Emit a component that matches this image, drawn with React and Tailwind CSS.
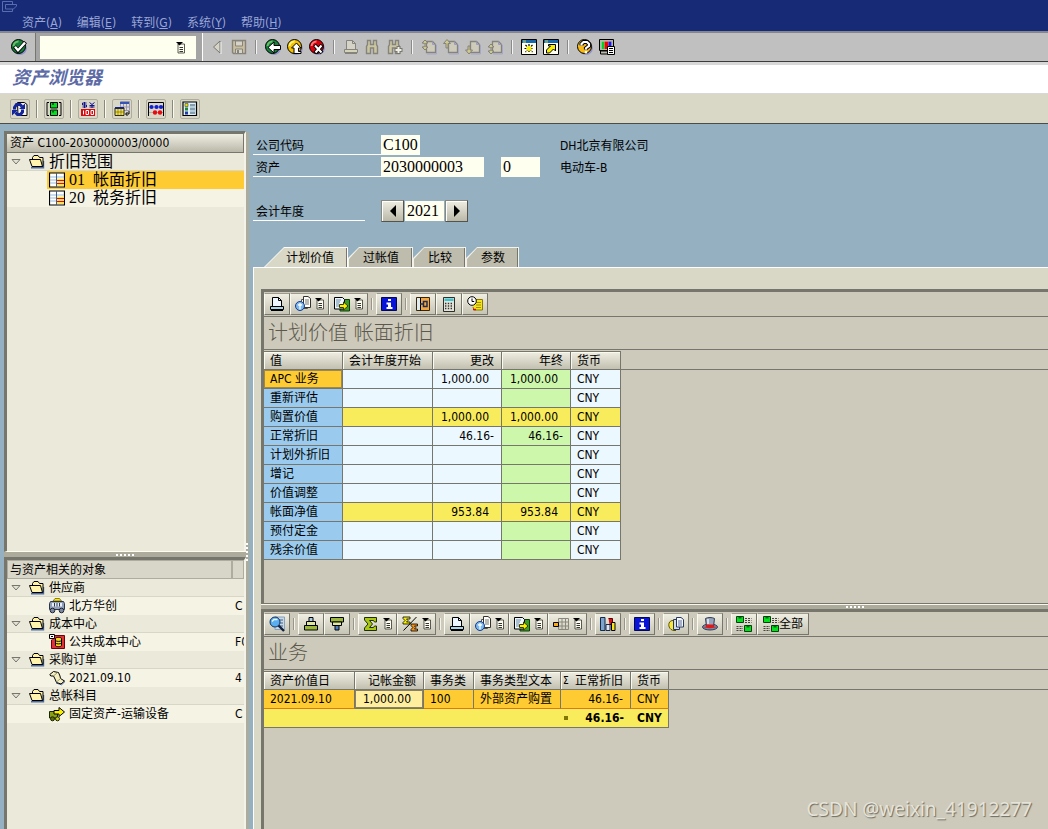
import clsx from 'clsx';

/* ---------- icons ---------- */

function Icon({ children, className = 'w-4 h-4', box = '0 0 16 16' }) {
  return (
    <svg className={clsx('shrink-0', className)} viewBox={box} fill="none" aria-hidden="true">
      {children}
    </svg>
  );
}

function Ball({ color, light, children }) {
  return (
    <Icon>
      <circle cx="9" cy="9.2" r="6.8" fill="#8f90c8" />
      <circle cx="7.5" cy="7.5" r="7" fill={color} stroke="#000" />
      <path d="M2.5 7a5 5 0 015-4.5" stroke={light} strokeWidth="2" />
      {children}
    </Icon>
  );
}

const CheckIcon = () => (
  <Ball color="#16803a" light="#6cc06a">
    <path d="M3.5 7.5l3.5 4L14.5 3" stroke="#000" strokeWidth="4" />
    <path d="M4 7.8l3 3.4L14 3.6" stroke="#fff" strokeWidth="2.4" />
  </Ball>
);

const BackIcon = () => (
  <Ball color="#16803a" light="#6cc06a">
    <path d="M3 8.5L9 3v3.5h6.500v4H9V14z" fill="#fff" stroke="#000" />
  </Ball>
);

const ExitIcon = () => (
  <Ball color="#f5c000" light="#fff27a">
    <path d="M9.500 4L14 9h-2.500v3.500H14v2H7V9H4.500z" fill="#fff" stroke="#000" />
  </Ball>
);

const CancelIcon = () => (
  <Ball color="#d8000c" light="#ff7a7a">
    <path d="M5.500 6l7.500 8M13 6l-7 8" stroke="#000" strokeWidth="4" />
    <path d="M6 6.500l6.500 7M12.500 6.500l-6 7" stroke="#fff" strokeWidth="2" />
  </Ball>
);

const HelpIcon = () => (
  <Ball color="#f8b818" light="#fff27a">
    <path d="M4.500 6.500V5l2-2h3.500l2 2v2l-3 2.200v1.300" stroke="#000" strokeWidth="4.200" />
    <path d="M4.500 6.500V5l2-2h3.500l2 2v2l-3 2.200v1.300M9 12v2.500" stroke="#fff" strokeWidth="2.200" />
  </Ball>
);

const PrevIcon = () => (
  <Icon>
    <path d="M11 2v12L4.500 8z" fill="#d6d4c6" stroke="#77766f" />
    <path d="M12 3v12" stroke="#f4f4f4" />
  </Icon>
);

const SaveIcon = () => (
  <Icon>
    <path d="M1.500 1.500h13v13h-12l-1-1z" fill="#c8bfa0" stroke="#85837b" strokeWidth="1.400" />
    <path d="M4.500 2h7v5h-7zM4.500 10h7v4.500h-7z" fill="#d6d4c8" stroke="#85837b" />
    <path d="M6 11h2v3H6z" fill="#85837b" />
  </Icon>
);

function PrintIcon({ off }) {
  const line = off ? '#85837b' : '#000';
  return (
    <Icon>
      <path d="M3.500 10V1.500h6l3 3V10" fill={off ? '#d5d3c8' : '#eef7ff'} stroke={line} />
      <path d="M9.500 1.500v3h3" stroke={line} />
      <path d="M1.500 10.500h13v3h-13z" fill={off ? '#d5d3b8' : '#a8d4ea'} stroke={line} />
      <path d="M2 14.500h12" stroke={line} />
    </Icon>
  );
}

function FindIcon({ next }) {
  return (
    <Icon>
      <path
        d="M1.500 14.500v-7l1-2v-4h3v4h3v-4h3v4l1 2v7h-4V9h-3v5.500z"
        fill="#c9c6a0"
        stroke="#85837b"
        strokeWidth="1.400"
      />
      {next && <path d="M11.500 7v8M7.500 11h8" stroke="#77766f" strokeWidth="4" />}
      {next && <path d="M11.500 8v6M8.500 11h6" stroke="#efeee6" strokeWidth="2" />}
    </Icon>
  );
}

const pageArrows = {
  first: 'M1 4l3-3 3 3H5v1H3V4zM1 8l3 3 3-3H5V7H3v1z',
  prev: 'M0.500 4.500l3.500-4 3.500 4H5V9H3V4.500z',
  next: 'M0.500 11l3.500 4 3.500-4H5V7H3v4z',
  last: 'M1 8l3-3 3 3H5v1H3V8zM1 12l3 3 3-3H5v-1H3v1z',
};

function PageIcon({ kind }) {
  return (
    <Icon>
      <path d="M5.500 13.500v-11h6l3 3v8z" fill="#cecbbb" stroke="#85837b" strokeWidth="1.300" />
      <path d="M11.500 2.500v3h3" stroke="#9a9ac4" />
      <path d="M6 15h9.500V6" stroke="#a5a6cc" />
      <path d={pageArrows[kind]} fill="#cfc98a" stroke="#85837b" />
    </Icon>
  );
}

function SessionIcon({ shortcut }) {
  return (
    <Icon>
      <path d="M.5.500h15v15H.5z" fill="#fffef0" stroke="#000" />
      <path d="M1 1h14v3H1z" fill="#1668ac" />
      <path d="M2 1h3v3H2z" fill="#f8f45c" opacity=".4" />
      {shortcut ? (
        <path d="M3.500 14v-3l4-4H5.500V5.500h7v6.500l-2-2L6.500 14z" fill="#f8f000" stroke="#000" />
      ) : (
        <g>
          <path d="M8 5v9M3.500 9.500h9M4.500 6l7 7M11.500 6l-7 7" stroke="#000" strokeWidth="1.200" strokeDasharray="2 1" />
          <circle cx="8" cy="9.500" r="2.500" fill="#f8f000" />
        </g>
      )}
    </Icon>
  );
}

const MonitorIcon = () => (
  <Icon>
    <path d="M.5.500h14v11H.5zM1.500 12h9v3h-9z" fill="#b9b7ac" stroke="#000" />
    <path d="M2.500 2.500h10v7.500h-10z" fill="#fff" />
    <path d="M2.500 2.500h3v7.500h-3z" fill="#00d028" />
    <path d="M5.500 2.500h4v7.500h-4z" fill="#f00000" />
    <path d="M9.500 2.500h3v7.500h-3z" fill="#1818e0" />
    <path d="M8.500 7.500h7v8h-7z" fill="#fff" stroke="#000" />
    <path d="M10 9.500h4M10 11.500h4M10 13.500h4" stroke="#000" />
  </Icon>
);

const RefreshIcon = () => (
  <Icon>
    <path d="M5.500 1.500h7l2.500 2v11H6z" fill="#f4f4f0" stroke="#000" />
    <path d="M2.500 8.500V6.500l2-3h3.500l2 2M10.500 8.500v2.500l-2 2.500H5.500L3.500 11.500" stroke="#14249a" strokeWidth="3" />
    <path d="M13 2.500v5.500H7zM0 14.500V9h6z" fill="#14249a" />
  </Icon>
);

const SwitchIcon = () => (
  <Icon>
    <path d="M3 1.500H1v13h2M13 1.500h2v13h-2" stroke="#000" />
    <path d="M4.500 1.500h7v5.500h-7zM4.500 9h7v5.500h-7z" fill="#00e01c" stroke="#000" />
    <path d="M6 2h2v2H6zM6 9.500h2v2H6z" fill="#0a6a14" />
  </Icon>
);

const CurrencyIcon = () => (
  <Icon>
    <path d="M1 8h14v7H1z" fill="#d80a10" />
    <path d="M6.500 2h-4v2h4v2h-4M4.500 1v6M9.500 1.500l2.500 2 2.500-2M12 3.500V7M9.500 4.500h5M9.500 6h5" stroke="#14148c" />
    <path d="M3.500 9.500v4M6 9.500h2.500v4H6zM11 9.500h2.500v4H11z" stroke="#fff" />
  </Icon>
);

const TableMoveIcon = () => (
  <Icon>
    <path d="M6.500.500h9v9h-9z" fill="#e0ddcc" stroke="#9896b4" />
    <path d="M6 1h9v2H6z" fill="#3454b8" />
    <path d="M9.500 3v6M12.500 3v6M7 6h8" stroke="#9896b4" />
    <path d="M1 7h9v7.500H1z" fill="#f7e23c" stroke="#000" strokeWidth=".8" />
    <path d="M1 6h9v2H1z" fill="#14248c" />
    <path d="M4 8v6M7 8v6M1 11h9" stroke="#5a5a30" strokeWidth=".6" />
    <path d="M15 10v3h-3M13.500 11l-2 2 2 2" stroke="#000" />
  </Icon>
);

const AbacusIcon = () => (
  <Icon>
    <path d="M.5 15V1.500h15V15" stroke="#000" />
    <path d="M1 6h14M1 11.500h14" stroke="#a9a79a" strokeWidth=".8" />
    <g fill="#1020d8">
      <circle cx="3.500" cy="6" r="2.100" />
      <circle cx="8.500" cy="6" r="2.100" />
      <circle cx="13" cy="6" r="2.100" />
    </g>
    <circle cx="7" cy="11.500" r="2.200" fill="#e80a10" />
    <circle cx="12" cy="11.500" r="2.200" fill="#e80a10" />
  </Icon>
);

const LegendIcon = () => (
  <Icon>
    <path d="M1 1h13.500v13.500H1z" fill="#dff0fb" stroke="#000" strokeWidth="1.200" />
    <path d="M3 2.500h3v3H3z" fill="#e8dc00" stroke="#44433c" strokeWidth=".6" />
    <path d="M3 6.500h3v3H3z" fill="#1c8a2c" />
    <path d="M3 10.500h3v3H3z" fill="#2038b0" />
    <path d="M8 4h5M8 8h5M8 12h5" stroke="#2c4a5c" />
    <path d="M8 6h5M8 10h5" stroke="#8aa8b8" />
  </Icon>
);

const FolderIcon = () => (
  <Icon>
    <path d="M2 13.800h12.500V7" stroke="#4a6da8" strokeWidth="1.400" />
    <path d="M3.500 6V3.500l1.500-2h4l1.500 2h3.500v9H12" fill="#fff2a4" stroke="#000" />
    <path d="M.5 5.500h11l2 7H3z" fill="#fff3ae" stroke="#000" />
  </Icon>
);

const AreaIcon = () => (
  <Icon>
    <path d="M.5 1h15v14H.5z" fill="#fff" stroke="#000" strokeWidth="1.200" />
    <path d="M1 5h6.500M1 8h6.500M1 11h6.500M8 5h7" stroke="#94b8e0" />
    <path d="M8 6.500h7v7.500H8z" fill="#ffe060" />
    <path d="M8 8.500h7M8 11.500h7" stroke="#e01010" />
    <path d="M7.500 1v14" stroke="#3c5c8c" />
  </Icon>
);

const VendorIcon = () => (
  <Icon>
    <path d="M4 3l2-2.500h4.500L12.500 3z" fill="#ffe800" stroke="#5a5000" strokeWidth=".7" />
    <path d="M1.500 3.500h13l1 2v6h-15v-6z" fill="#8fa0b8" stroke="#2c3448" />
    <path d="M3 5h10v3.500H3z" fill="#e8eef8" />
    <path d="M5.500 5v3.500M8 5v3.500M10.500 5v3.500" stroke="#2c3448" />
    <circle cx="3.500" cy="12.500" r="2.300" fill="#7c88a0" stroke="#1c2434" />
    <circle cx="12.500" cy="12.500" r="2.300" fill="#7c88a0" stroke="#1c2434" />
  </Icon>
);

const CostCenterIcon = () => (
  <Icon>
    <path d="M3 1.500h12.500v13H2.500V6" fill="#e03038" stroke="#700008" />
    <path d="M.5.500h5v4h-5z" fill="#fff" stroke="#000" />
    <path d="M2 2.500h2" stroke="#000" />
    <path d="M6.500 4.500c0-1.500 6-1.500 6 0v7c0 1.500-6 1.500-6 0z" fill="#f8d820" stroke="#000" />
    <path d="M6.500 6.500c1 1.200 5 1.200 6 0M6.500 9c1 1.200 5 1.200 6 0" stroke="#000" />
  </Icon>
);

const OrderIcon = () => (
  <Icon>
    <path d="M7 13l5.500 1.800L16 11.500" stroke="#4a6da8" />
    <path d="M.8 4.500L4.500 1.500l5 1L11 6l.5 2.500 4 2.500-3.500 3-4.500-1.500L6 9 4.500 6H1.800z" fill="#f4eec0" stroke="#000" />
    <path d="M4.500 6L8.500 2.500M11.500 8.500L7.500 12" stroke="#8a8458" strokeWidth=".8" />
  </Icon>
);

const AccountIcon = () => (
  <Icon>
    <path d="M.5 5.500h8V12H.5z" fill="#8aa014" stroke="#1c2400" />
    <path d="M5 4.500h5V1.500l5.500 4.500L10 10.500V8H5z" fill="#f8f000" stroke="#000" />
    <circle cx="3.500" cy="12.800" r="2" fill="#5c7010" stroke="#1c2400" />
    <circle cx="8.500" cy="12.800" r="2" fill="#c8d010" stroke="#1c2400" />
  </Icon>
);

const ListIcon = () => (
  <Icon className="w-2.5 h-3" box="0 0 10 12">
    <path d="M2 2h6.500v9H2z" fill="#fffef0" stroke="#33322c" strokeWidth=".8" />
    <path d="M3.500 5.500H7M3.500 7.500H7M3.500 9.500H7" stroke="#000" strokeWidth=".8" />
    <path d="M0 0h7L3.500 3.500z" fill="#000" />
  </Icon>
);

const PreviewIcon = () => (
  <Icon>
    <path d="M6.500 3.500v9h6v-9z" fill="#fff" stroke="#55544c" />
    <path d="M8.500.500h4.500l2.500 2v9h-7z" fill="#fff" stroke="#33322c" />
    <path d="M10 4h4M10 6h4M10 8h4" stroke="#77766c" />
    <circle cx="5" cy="10" r="4.500" fill="#7ab8f0" stroke="#183a8c" />
    <path d="M5 7v6.500M3 8.500c1 1 3 1 4 0" stroke="#fff" strokeWidth="1.300" />
  </Icon>
);

const ExportIcon = () => (
  <Icon>
    <path d="M10 3.500h5.500v11.500H6V13" fill="#3a9c28" stroke="#123c0c" />
    <path d="M.5 1.500h8l2 2v9.500H.5z" fill="#eef7ff" stroke="#000" />
    <path d="M2 4h5M2 6h4M2 8h3M2 10h3" stroke="#6688a0" />
    <path d="M5.500 8.500h4v-2.500L14 10l-4.500 4v-2.500h-4z" fill="#f8f000" stroke="#3a3a00" />
  </Icon>
);

const InfoIcon = () => (
  <Icon>
    <path d="M.5 1.500h15v13H.5z" fill="#0814d8" stroke="#04084c" />
    <path d="M7 3h3v2H7zM5.500 6.500H10V11h1.500v2h-6v-2H7V8.500H5.500z" fill="#fff" />
  </Icon>
);

const AreaSwitchIcon = () => (
  <Icon>
    <path d="M1.500 1.500h13v13h-13z" fill="#f4a83c" stroke="#3c2400" />
    <path d="M2 2h3.500v12H2z" fill="#dcecf6" />
    <path d="M5.500 2v12.500" stroke="#000" />
    <path d="M5 8h4M8.500 8V5.500H12v5H8.500z" stroke="#1c2c5c" strokeWidth="1.500" />
  </Icon>
);

const CalcIcon = () => (
  <Icon>
    <path d="M2.500 1.500h11v14h-11z" fill="#e4e3da" stroke="#000" strokeWidth=".8" />
    <path d="M3.500 2.500h9v2.500h-9z" fill="#38c4d0" />
    <path d="M4 7.500h8M4 10h8M4 12.500h8" stroke="#33322c" strokeWidth="1.300" strokeDasharray="1.400 1.400" />
  </Icon>
);

const ClockIcon = () => (
  <Icon>
    <path d="M8 3.500h7.500v10.500H7l-1-3" fill="#f4e418" stroke="#8a7a00" />
    <path d="M9 6.500h5M9 9h5M9 11.500h5" stroke="#a08c00" />
    <circle cx="5" cy="5" r="4.300" fill="#fff" stroke="#000" />
    <path d="M5 2.500V5.500h2.200" stroke="#000" />
    <path d="M6 13.500h3" stroke="#d80a10" strokeWidth="1.500" />
  </Icon>
);

const DetailIcon = () => (
  <Icon>
    <path d="M6 1h9.500v12.500H6z" fill="#c6d8ea" stroke="#8aa0b8" />
    <path d="M11 4h3M11 7h3M11 10h3" stroke="#446080" />
    <circle cx="6" cy="6" r="5" fill="#58aef0" stroke="#14305c" />
    <path d="M3 5.500l2-2h3.500" stroke="#e8f6ff" strokeWidth="1.300" />
    <path d="M9.500 9.500l5.500 5.500" stroke="#14203c" strokeWidth="2.400" />
  </Icon>
);

const SortUpIcon = () => (
  <Icon>
    <path d="M6 1.500h4V6H6z" fill="#a9cce4" stroke="#000" />
    <path d="M3.500 5.500h9v4h-9z" fill="#dfe89c" stroke="#000" />
    <path d="M1.500 9.500h13v4.500h-13z" fill="#9cb83c" stroke="#000" />
  </Icon>
);

const SortDownIcon = () => (
  <Icon>
    <path d="M1.500 1.500h13V6h-13z" fill="#9cb83c" stroke="#000" />
    <path d="M3.500 6h9v3.500h-9z" fill="#dfe89c" stroke="#000" />
    <path d="M6 9.500h4V14H6z" fill="#4c7cc4" stroke="#000" />
  </Icon>
);

const SumIcon = () => (
  <Icon>
    <path d="M1.500 1.500h12V6h-2l-1-1.500H6.500l3 3.500-3 3.500h4l1-1.500h2v4.500h-12V12L5 8 1.500 4z" fill="#a8c814" stroke="#202c00" />
  </Icon>
);

const SubtotalIcon = () => (
  <Icon>
    <path d="M1 1h7v2H4.500l1.500 1.500L4.500 6H8v2H1V6.500l2-2-2-2z" fill="#f8f000" stroke="#000" strokeWidth=".8" />
    <path d="M9 8h6.500v2h-3l1.300 1.500-1.300 1.500h3V15H9v-1.500l1.800-2L9 9.500z" fill="#f49018" stroke="#000" strokeWidth=".8" />
    <path d="M14.500 1L1.500 14.500" stroke="#000" />
  </Icon>
);

const LayoutIcon = () => (
  <Icon>
    <path d="M5.500 2.500h10v11h-10zM5.500 6h10M5.500 10h10M9 2.500v11M12.500 2.500v11" stroke="#8a887c" />
    <path d="M.5 6.500h5v4h-5z" fill="#f8a818" stroke="#000" />
  </Icon>
);

const ChartIcon = () => (
  <Icon>
    <path d="M.5 1.500h4.500v13H.5z" fill="#7ca4cc" stroke="#14284c" />
    <path d="M6 8.500h4v6H6z" fill="#e4e6ee" stroke="#14284c" />
    <path d="M8.500 2.500h4v6h-3" fill="#d81018" stroke="#500" />
    <path d="M11.500 6.500h3.500v8h-3.500z" fill="#f8e418" stroke="#000" />
  </Icon>
);

const DocsIcon = () => (
  <Icon>
    <path d="M5 4.500c-6 0-5.500 9.500 1 10h2" fill="#f8e83c" stroke="#5a5000" />
    <path d="M5.500 3.500h6v10h-6z" fill="#d0dcec" stroke="#28385c" />
    <path d="M8.500 1.500h4.500l2.500 2V11h-7z" fill="#f4f8ff" stroke="#28385c" />
    <path d="M10 5h4M10 7h4M10 9h4" stroke="#5a6c94" />
  </Icon>
);

const HatIcon = () => (
  <Icon>
    <ellipse cx="8" cy="11" rx="7.500" ry="3" fill="#7c88a4" stroke="#343c54" />
    <path d="M3.500 2.500c2-1.300 7-1.300 9 0l-1 8h-7z" fill="#98a4bc" stroke="#343c54" />
    <path d="M6 3v5" stroke="#eef2fa" strokeWidth="1.500" />
    <path d="M4.500 8.500h7v2l3 .5c-2 1.500-11 1.500-13 0l3-.5z" fill="#e01818" />
  </Icon>
);

const ExpandIcon = () => (
  <Icon>
    <path d="M.5.500h7v6h-7zM8.500 9.500h7v6h-7z" fill="#00e01c" stroke="#0a3c10" />
    <path d="M2.500 1h3v1.500h-3zM10.500 10h3v1.500h-3z" fill="#0a6a14" />
    <path d="M9 2.500h6.500M9 4.500h6.500M9 6.500h6.500M.5 10.500H7M.5 12.500H7M.5 14.500H7" stroke="#44433c" strokeDasharray="2 1" />
  </Icon>
);

/* ---------- small building blocks ---------- */

function IconButton({ label, children }) {
  return (
    <button type="button" aria-label={label} title={label} className="flex items-center">
      {children}
    </button>
  );
}

function BarSep() {
  return (
    <div className="w-1.5 h-3.5 flex justify-center">
      <div className="w-0.5 bg-[#f4f4f4] border-l border-[#8a8a8a]" />
    </div>
  );
}

function GridButton({ label, menu, text, children }) {
  return (
    <button
      type="button"
      aria-label={label}
      title={label}
      className={clsx(
        'h-[22px] flex items-center justify-center border border-[#77766c] border-t-[#9c9a8e] border-l-[#fbfaf0] bg-linear-to-b from-[#efeee2] to-[#c6c4b4]',
        menu && 'w-[39px] gap-1',
        text && 'w-[52px]',
        !menu && !text && 'w-[26px]'
      )}
    >
      {children}
      {menu && <ListIcon />}
      {text}
    </button>
  );
}

function GridSep() {
  return (
    <div className="w-2 flex justify-center items-center">
      <div className="w-0.5 h-3 bg-[#f4f3ea] border-l border-[#98968a]" />
    </div>
  );
}

function GridPanel({ title, tools, children, className }) {
  return (
    <section className={clsx('flex flex-col border-t-3 border-l-3 border-[#77766c] bg-[#cdcabb]', className)}>
      <div className="flex h-[25px] items-center border-b border-[#77766c]">{tools}</div>
      <h2 className="h-[33px] pl-1 text-xl leading-8 font-light text-[#5c584c] border-b border-[#77766c] mb-px">
        {title}
      </h2>
      {children}
    </section>
  );
}

function Th({ children, right, className }) {
  return (
    <th
      scope="col"
      className={clsx(
        'h-[19px] p-0 font-normal whitespace-nowrap border-r border-b border-t border-[#77766c] bg-linear-to-b from-[#efeee2] to-[#c2c0b0] shadow-[inset_1px_1px_0_#fbfaf0]',
        right ? 'text-right pr-[7px]' : 'text-left',
        className ?? 'pl-1.5'
      )}
    >
      {children}
    </th>
  );
}

function Td({ children, className }) {
  return (
    <td className={clsx('h-[19px] p-0 whitespace-nowrap border-r border-b border-[#77766c]', className)}>
      {children}
    </td>
  );
}

function Grips({ vertical }) {
  return (
    <div className={clsx('flex gap-0.5', vertical && 'flex-col')}>
      {[0, 1, 2, 3, 4].map((i) => (
        <span key={i} className="w-0.5 h-0.5 bg-white" />
      ))}
    </div>
  );
}

function Tab({ label, active }) {
  return (
    <button
      type="button"
      role="tab"
      aria-selected={!!active}
      className={clsx(
        'h-5 pt-px pr-px',
        active
          ? 'bg-white [clip-path:polygon(20px_0,100%_0,100%_100%,0_100%)]'
          : 'bg-[#f4f3ea] [clip-path:polygon(11px_0,100%_0,100%_100%,0_100%,0_11px)]'
      )}
    >
      <span
        className={clsx(
          'block h-full leading-5 border-r',
          active
            ? 'pl-[22px] pr-3 bg-[#d9d8c6] border-[#77766c] [clip-path:polygon(20px_0,100%_0,100%_100%,1px_100%)]'
            : 'pl-[15px] pr-3 bg-[#bebcad] border-[#77766c] [clip-path:polygon(11px_0,100%_0,100%_100%,1px_100%,1px_11px)]'
        )}
      >
        {label}
      </span>
    </button>
  );
}

function FolderRow({ label, big }) {
  return (
    <div className="h-[18px] flex items-center pl-1 border-b border-[#d8d6c6] bg-[#ebe9d9]">
      <svg className="w-2.5 h-1.5 mr-2" viewBox="0 0 10 6" aria-hidden="true">
        <path d="M1 .5h8L5 5z" fill="#e4e2d4" stroke="#77766c" />
      </svg>
      <FolderIcon />
      <span className={clsx('pl-1', big && 'text-base leading-4')}>{label}</span>
    </div>
  );
}

/* ---------- data ---------- */

const menus = [
  ['资产', 'A'],
  ['编辑', 'E'],
  ['转到', 'G'],
  ['系统', 'Y'],
  ['帮助', 'H'],
];

const areas = [
  { code: '01', name: '帐面折旧', selected: true },
  { code: '20', name: '税务折旧' },
];

const related = [
  { folder: '供应商', item: '北方华创', value: 'C', icon: <VendorIcon /> },
  { folder: '成本中心', item: '公共成本中心', value: 'F0', icon: <CostCenterIcon /> },
  { folder: '采购订单', item: '2021.09.10', value: '4', icon: <OrderIcon /> },
  { folder: '总帐科目', item: '固定资产-运输设备', value: 'C', icon: <AccountIcon /> },
];

const planned = [
  { name: 'APC 业务', change: '1,000.00', end: '1,000.00', selected: true },
  { name: '重新评估' },
  { name: '购置价值', change: '1,000.00', end: '1,000.00', total: true },
  { name: '正常折旧', change: '46.16-', end: '46.16-' },
  { name: '计划外折旧' },
  { name: '增记' },
  { name: '价值调整' },
  { name: '帐面净值', change: '953.84', end: '953.84', total: true },
  { name: '预付定金' },
  { name: '残余价值' },
];

// positive amounts keep room for the trailing minus sign
const amountPad = (v) => (v && v.endsWith('-') ? 'pr-[7px]' : 'pr-3');

/* ---------- page sections ---------- */

function MenuBar() {
  return (
    <header className="h-[31px] bg-[#172a75] text-[#9aa6d4] flex flex-col justify-between">
      <Icon className="w-4 h-3 ml-0.5 mt-px" box="0 0 16 12">
        <path d="M10.500 4V.5H.5v10h10V8M3.500 3.500h11v1.500l-3 3h-8z" stroke="#5a6cb0" />
      </Icon>
      <nav className="flex gap-[15px] pl-[22px] leading-4">
        {menus.map(([name, key]) => (
          <a key={key} href="#">
            {name}(<u>{key}</u>)
          </a>
        ))}
      </nav>
    </header>
  );
}

function SystemBar() {
  return (
    <div className="h-[31px] flex bg-[#c0c0c0] border-t-2 border-t-[#85868e] border-b border-b-[#3c3c3c]">
      <div className="w-9 shrink-0 flex items-center pl-[11px] border-r border-[#77766c]">
        <IconButton label="回车">
          <CheckIcon />
        </IconButton>
      </div>
      <div className="w-[166px] shrink-0 flex pl-1 pr-1.5 pt-[3px] pb-0.5 bg-[#a4a4a4]">
        <div className="flex-1 min-w-0 flex items-center bg-[#fffff0] pr-2.5">
          <input aria-label="命令" className="w-0 min-w-0 flex-1 h-full px-1 outline-none" />
          <IconButton label="历史">
            <ListIcon />
          </IconButton>
        </div>
      </div>
      <div className="flex items-center gap-1.5 pl-1.5 border-l border-white">
        <IconButton label="收起"><PrevIcon /></IconButton>
        <IconButton label="保存"><SaveIcon /></IconButton>
        <BarSep />
        <IconButton label="返回"><BackIcon /></IconButton>
        <IconButton label="退出"><ExitIcon /></IconButton>
        <IconButton label="取消"><CancelIcon /></IconButton>
        <BarSep />
        <IconButton label="打印"><PrintIcon off /></IconButton>
        <IconButton label="查找"><FindIcon /></IconButton>
        <IconButton label="继续查找"><FindIcon next /></IconButton>
        <BarSep />
        <IconButton label="首页"><PageIcon kind="first" /></IconButton>
        <IconButton label="上一页"><PageIcon kind="prev" /></IconButton>
        <IconButton label="下一页"><PageIcon kind="next" /></IconButton>
        <IconButton label="末页"><PageIcon kind="last" /></IconButton>
        <BarSep />
        <IconButton label="新会话"><SessionIcon /></IconButton>
        <IconButton label="快捷方式"><SessionIcon shortcut /></IconButton>
        <BarSep />
        <IconButton label="帮助"><HelpIcon /></IconButton>
        <IconButton label="布局"><MonitorIcon /></IconButton>
      </div>
    </div>
  );
}

function AppBar() {
  const tools = [
    ['刷新', <RefreshIcon />],
    ['切换', <SwitchIcon />],
    ['货币', <CurrencyIcon />],
    ['转换', <TableMoveIcon />],
    ['模拟', <AbacusIcon />],
    ['图例', <LegendIcon />],
  ];
  return (
    <div className="h-[30px] flex items-center gap-1.5 pl-2.5 bg-[#d9d8c6] border-b border-[#4c4c48]">
      {tools.map(([label, icon], i) => (
        <div key={label} className="flex items-center gap-1.5">
          {i > 0 && <div className="w-0.5 h-[18px] bg-[#fbfaf0] border-l border-[#8a887c]" />}
          <button
            type="button"
            aria-label={label}
            title={label}
            className="w-5 h-5 flex items-center justify-center rounded-xs border border-[#aeac9e]"
          >
            {icon}
          </button>
        </div>
      ))}
    </div>
  );
}

function LeftPane() {
  return (
    <aside className="w-[242px] shrink-0 flex flex-col pt-[7px]">
      <section className="h-[421px] border-t-3 border-l-3 border-[#77766c] border-r-2 border-r-[#f4f3ea] border-b border-b-[#fffff0] bg-[#ebe9d9]">
        <h2 className="h-[19px] pl-[3px] leading-[18px] border-r border-b border-[#77766c] bg-linear-to-b from-[#f0efe4] to-[#bab8a8]">
          资产 C100-2030000003/0000
        </h2>
        <FolderRow label="折旧范围" big />
        {areas.map((a) => (
          <div key={a.code} className="h-[18px] pl-10 bg-[#f5f3e4]">
            <div
              className={clsx(
                "h-full flex items-center pl-0.5 font-['Liberation_Serif','Noto_Sans_CJK_SC',serif] text-base leading-4",
                a.selected && 'bg-[#ffcb32]'
              )}
            >
              <AreaIcon />
              <span className="pl-1 pr-2">{a.code}</span>
              <span>{a.name}</span>
            </div>
          </div>
        ))}
      </section>

      <div className="h-[5px] flex items-center justify-center bg-[#adab9c]">
        <Grips />
      </div>

      <section className="flex-1 border-t-3 border-l-3 border-[#77766c] border-r-2 border-r-[#f4f3ea] bg-[#ebe9d9]">
        <div className="h-[19px] flex bg-[#d8d6c8] border border-[#aeac9e]">
          <h2 className="flex-1 pl-0.5 leading-[18px]">与资产相关的对象</h2>
          <div className="w-3 border-l-2 border-[#aeac9e]" />
        </div>
        {related.map((r) => (
          <div key={r.folder}>
            <FolderRow label={r.folder} />
            <div className="h-[18px] flex items-center pl-[42px] bg-[#f5f3e4]">
              {r.icon}
              <span className="flex-1 pl-1 whitespace-nowrap">{r.item}</span>
              <span className="w-[9px] overflow-hidden">{r.value}</span>
            </div>
          </div>
        ))}
      </section>
    </aside>
  );
}

function AssetForm() {
  const field = "bg-[#fffff0] h-5 px-0.5 outline-none font-['Liberation_Serif','Noto_Sans_CJK_SC',serif] text-base leading-5";
  const stepper =
    'w-[23px] h-[22px] flex items-center justify-center border border-[#55544c] border-t-[#8a887c] border-l-[#8a887c] bg-linear-to-b from-[#efeee2] to-[#bab8a8] shadow-[inset_1px_1px_0_#fff]';
  return (
    <form className="pt-[11px]">
      <div className="flex h-5 mb-0.5">
        <label htmlFor="company" className="w-32 h-5 pl-[3px] leading-[22px] border-b border-white">公司代码</label>
        <input id="company" readOnly defaultValue="C100" className={clsx(field, 'w-[39px]')} />
        <span className="pl-[140px] leading-[22px]">DH北京有限公司</span>
      </div>
      <div className="flex h-5">
        <label htmlFor="asset" className="w-32 h-5 pl-[3px] leading-[22px] border-b border-white">资产</label>
        <input id="asset" readOnly defaultValue="2030000003" className={clsx(field, 'w-[103px]')} />
        <input aria-label="子编号" readOnly defaultValue="0" className={clsx(field, 'w-[39px] ml-[17px]')} />
        <span className="pl-5 leading-[22px]">电动车-B</span>
      </div>
      <div className="flex items-center mt-[23px]">
        <label htmlFor="year" className="w-28 h-5 mr-4 pl-[3px] leading-[22px] border-b border-white">会计年度</label>
        <button type="button" aria-label="上一年" className={stepper}>
          <Icon className="w-2 h-3" box="0 0 8 12"><path d="M7 0v12L1 6z" fill="#000" /></Icon>
        </button>
        <input id="year" readOnly defaultValue="2021" className={clsx(field, 'w-[39px] mx-px')} />
        <button type="button" aria-label="下一年" className={stepper}>
          <Icon className="w-2 h-3" box="0 0 8 12"><path d="M1 0v12l6-6z" fill="#000" /></Icon>
        </button>
      </div>
    </form>
  );
}

function PlannedValues() {
  const tools = (
    <>
      <GridButton label="打印"><PrintIcon /></GridButton>
      <GridButton label="视图" menu><PreviewIcon /></GridButton>
      <GridButton label="导出" menu><ExportIcon /></GridButton>
      <GridSep />
      <GridButton label="信息"><InfoIcon /></GridButton>
      <GridSep />
      <GridButton label="转换折旧范围"><AreaSwitchIcon /></GridButton>
      <GridButton label="计算"><CalcIcon /></GridButton>
      <GridButton label="期间"><ClockIcon /></GridButton>
    </>
  );
  return (
    <GridPanel title="计划价值 帐面折旧" tools={tools} className="h-[315px] border-b border-b-[#77766c]">
      <div className="flex">
        <table className="w-[357px] table-fixed border-separate border-spacing-0">
          <colgroup>
            <col className="w-[79px]" />
            <col className="w-[90px]" />
            <col className="w-[69px]" />
            <col className="w-[69px]" />
            <col className="w-[50px]" />
          </colgroup>
          <thead>
            <tr>
              <Th>值</Th>
              <Th>会计年度开始</Th>
              <Th right>更改</Th>
              <Th right>年终</Th>
              <Th>货币</Th>
            </tr>
          </thead>
          <tbody>
            {planned.map((row) => {
              const bg = row.total ? 'bg-[#f9ec5c]' : 'bg-[#ecf8ff]';
              return (
                <tr key={row.name}>
                  <th
                    scope="row"
                    className={clsx(
                      'h-[19px] p-0 pl-1.5 text-left font-normal border-r border-b border-[#77766c]',
                      row.selected ? 'bg-[#ffcb32] shadow-[inset_0_0_0_1px_#a08848]' : 'bg-[#9acbee]'
                    )}
                  >
                    {row.name}
                  </th>
                  <Td className={bg} />
                  <Td className={clsx('text-right', bg, amountPad(row.change))}>{row.change}</Td>
                  <Td className={clsx('text-right', row.total ? 'bg-[#f9ec5c]' : 'bg-[#cdf7ab]', amountPad(row.end))}>
                    {row.end}
                  </Td>
                  <Td className={clsx('pl-1.5', bg)}>CNY</Td>
                </tr>
              );
            })}
          </tbody>
        </table>
        <div className="flex-1 h-[19px] border-b border-[#77766c]" />
      </div>
    </GridPanel>
  );
}

function Transactions() {
  const tools = (
    <>
      <GridButton label="明细"><DetailIcon /></GridButton>
      <GridSep />
      <GridButton label="升序"><SortUpIcon /></GridButton>
      <GridButton label="降序"><SortDownIcon /></GridButton>
      <GridSep />
      <GridButton label="合计" menu><SumIcon /></GridButton>
      <GridButton label="小计" menu><SubtotalIcon /></GridButton>
      <GridSep />
      <GridButton label="打印"><PrintIcon /></GridButton>
      <GridButton label="视图" menu><PreviewIcon /></GridButton>
      <GridButton label="导出" menu><ExportIcon /></GridButton>
      <GridButton label="布局" menu><LayoutIcon /></GridButton>
      <GridSep />
      <GridButton label="图形"><ChartIcon /></GridButton>
      <GridSep />
      <GridButton label="信息"><InfoIcon /></GridButton>
      <GridSep />
      <GridButton label="凭证"><DocsIcon /></GridButton>
      <GridSep />
      <GridButton label="主数据"><HatIcon /></GridButton>
      <GridSep />
      <GridButton label="展开"><ExpandIcon /></GridButton>
      <GridButton label="展开全部" text="全部"><ExpandIcon /></GridButton>
    </>
  );
  const cell = 'bg-[#ffcb32] border-b-[#d87a1c]';
  return (
    <GridPanel title="业务" tools={tools} className="flex-1">
      <div className="flex">
        <table className="w-[405px] table-fixed border-separate border-spacing-0">
          <colgroup>
            <col className="w-[91px]" />
            <col className="w-[69px]" />
            <col className="w-[50px]" />
            <col className="w-[87px]" />
            <col className="w-[70px]" />
            <col className="w-[38px]" />
          </colgroup>
          <thead>
            <tr>
              <Th>资产价值日</Th>
              <Th right>记帐金额</Th>
              <Th>事务类</Th>
              <Th>事务类型文本</Th>
              <Th className="pl-0.5 pr-[7px]">
                <span className="flex justify-between items-center">
                  <span className="text-[10px] leading-4">Σ</span>
                  正常折旧
                </span>
              </Th>
              <Th>货币</Th>
            </tr>
          </thead>
          <tbody>
            <tr>
              <Td className={clsx('pl-1.5', cell)}>2021.09.10</Td>
              <Td className="text-right pr-3 bg-[#ffee9e] shadow-[inset_0_0_0_1px_#8a8060]">1,000.00</Td>
              <Td className={clsx('pl-1.5', cell)}>100</Td>
              <Td className={clsx('pl-1.5', cell)}>外部资产购置</Td>
              <Td className={clsx('text-right pr-[7px]', cell)}>46.16-</Td>
              <Td className={clsx('pl-1.5', cell)}>CNY</Td>
            </tr>
            <tr className="font-bold">
              <td colSpan={4} className="h-[19px] p-0 bg-[#f9ec5c] border-b border-[#77766c]" />
              <td className="h-[19px] p-0 pl-[3px] pr-[7px] bg-[#f9ec5c] border-b border-[#77766c]">
                <span className="flex justify-between items-center">
                  <span className="w-1 h-1 bg-[#807600]" />
                  46.16-
                </span>
              </td>
              <Td className="pl-1.5 bg-[#f9ec5c]">CNY</Td>
            </tr>
          </tbody>
        </table>
        <div className="flex-1 h-[19px] border-b border-[#77766c]" />
      </div>
    </GridPanel>
  );
}

export default function App() {
  return (
    <div className="relative min-h-screen flex flex-col overflow-hidden bg-[#94b0c1] text-black text-xs leading-4 font-['DejaVu_Sans_Condensed','Noto_Sans_CJK_SC',sans-serif]">
      <MenuBar />
      <SystemBar />
      <div className="h-8 pl-3 bg-white border-t-3 border-t-[#d8d8d8] border-b border-b-[#d8d8d8]">
        <h1 className="text-lg leading-[26px] font-bold italic text-[#5c6aa6]">资产浏览器</h1>
      </div>
      <AppBar />

      <main className="flex-1 flex pl-1">
        <LeftPane />
        <div className="w-[3px] mt-2 pt-[411px] bg-[#adab9c] shrink-0">
          <Grips vertical />
        </div>

        <div className="flex-1 min-w-0 flex flex-col pl-1">
          <AssetForm />
          <div role="tablist" className="flex pl-[11px] mt-[25px]">
            <Tab label="计划价值" active />
            <Tab label="过帐值" />
            <Tab label="比较" />
            <Tab label="参数" />
          </div>
          <div className="flex-1 flex flex-col pl-[7px] pt-[21px] bg-[#d9d8c6] border-t border-l border-white">
            <PlannedValues />
            <div className="h-[5px] pl-[585px] flex items-center border-t border-[#f8f7ee] bg-[#adab9c]">
              <Grips />
            </div>
            <Transactions />
          </div>
        </div>
      </main>

      <div className="absolute right-4 bottom-1 text-[19px] leading-8 font-['Noto_Sans',sans-serif] text-[#e6e4da] [text-shadow:1px_1px_1px_#6c6a60]">
        CSDN @weixin_41912277
      </div>
    </div>
  );
}
